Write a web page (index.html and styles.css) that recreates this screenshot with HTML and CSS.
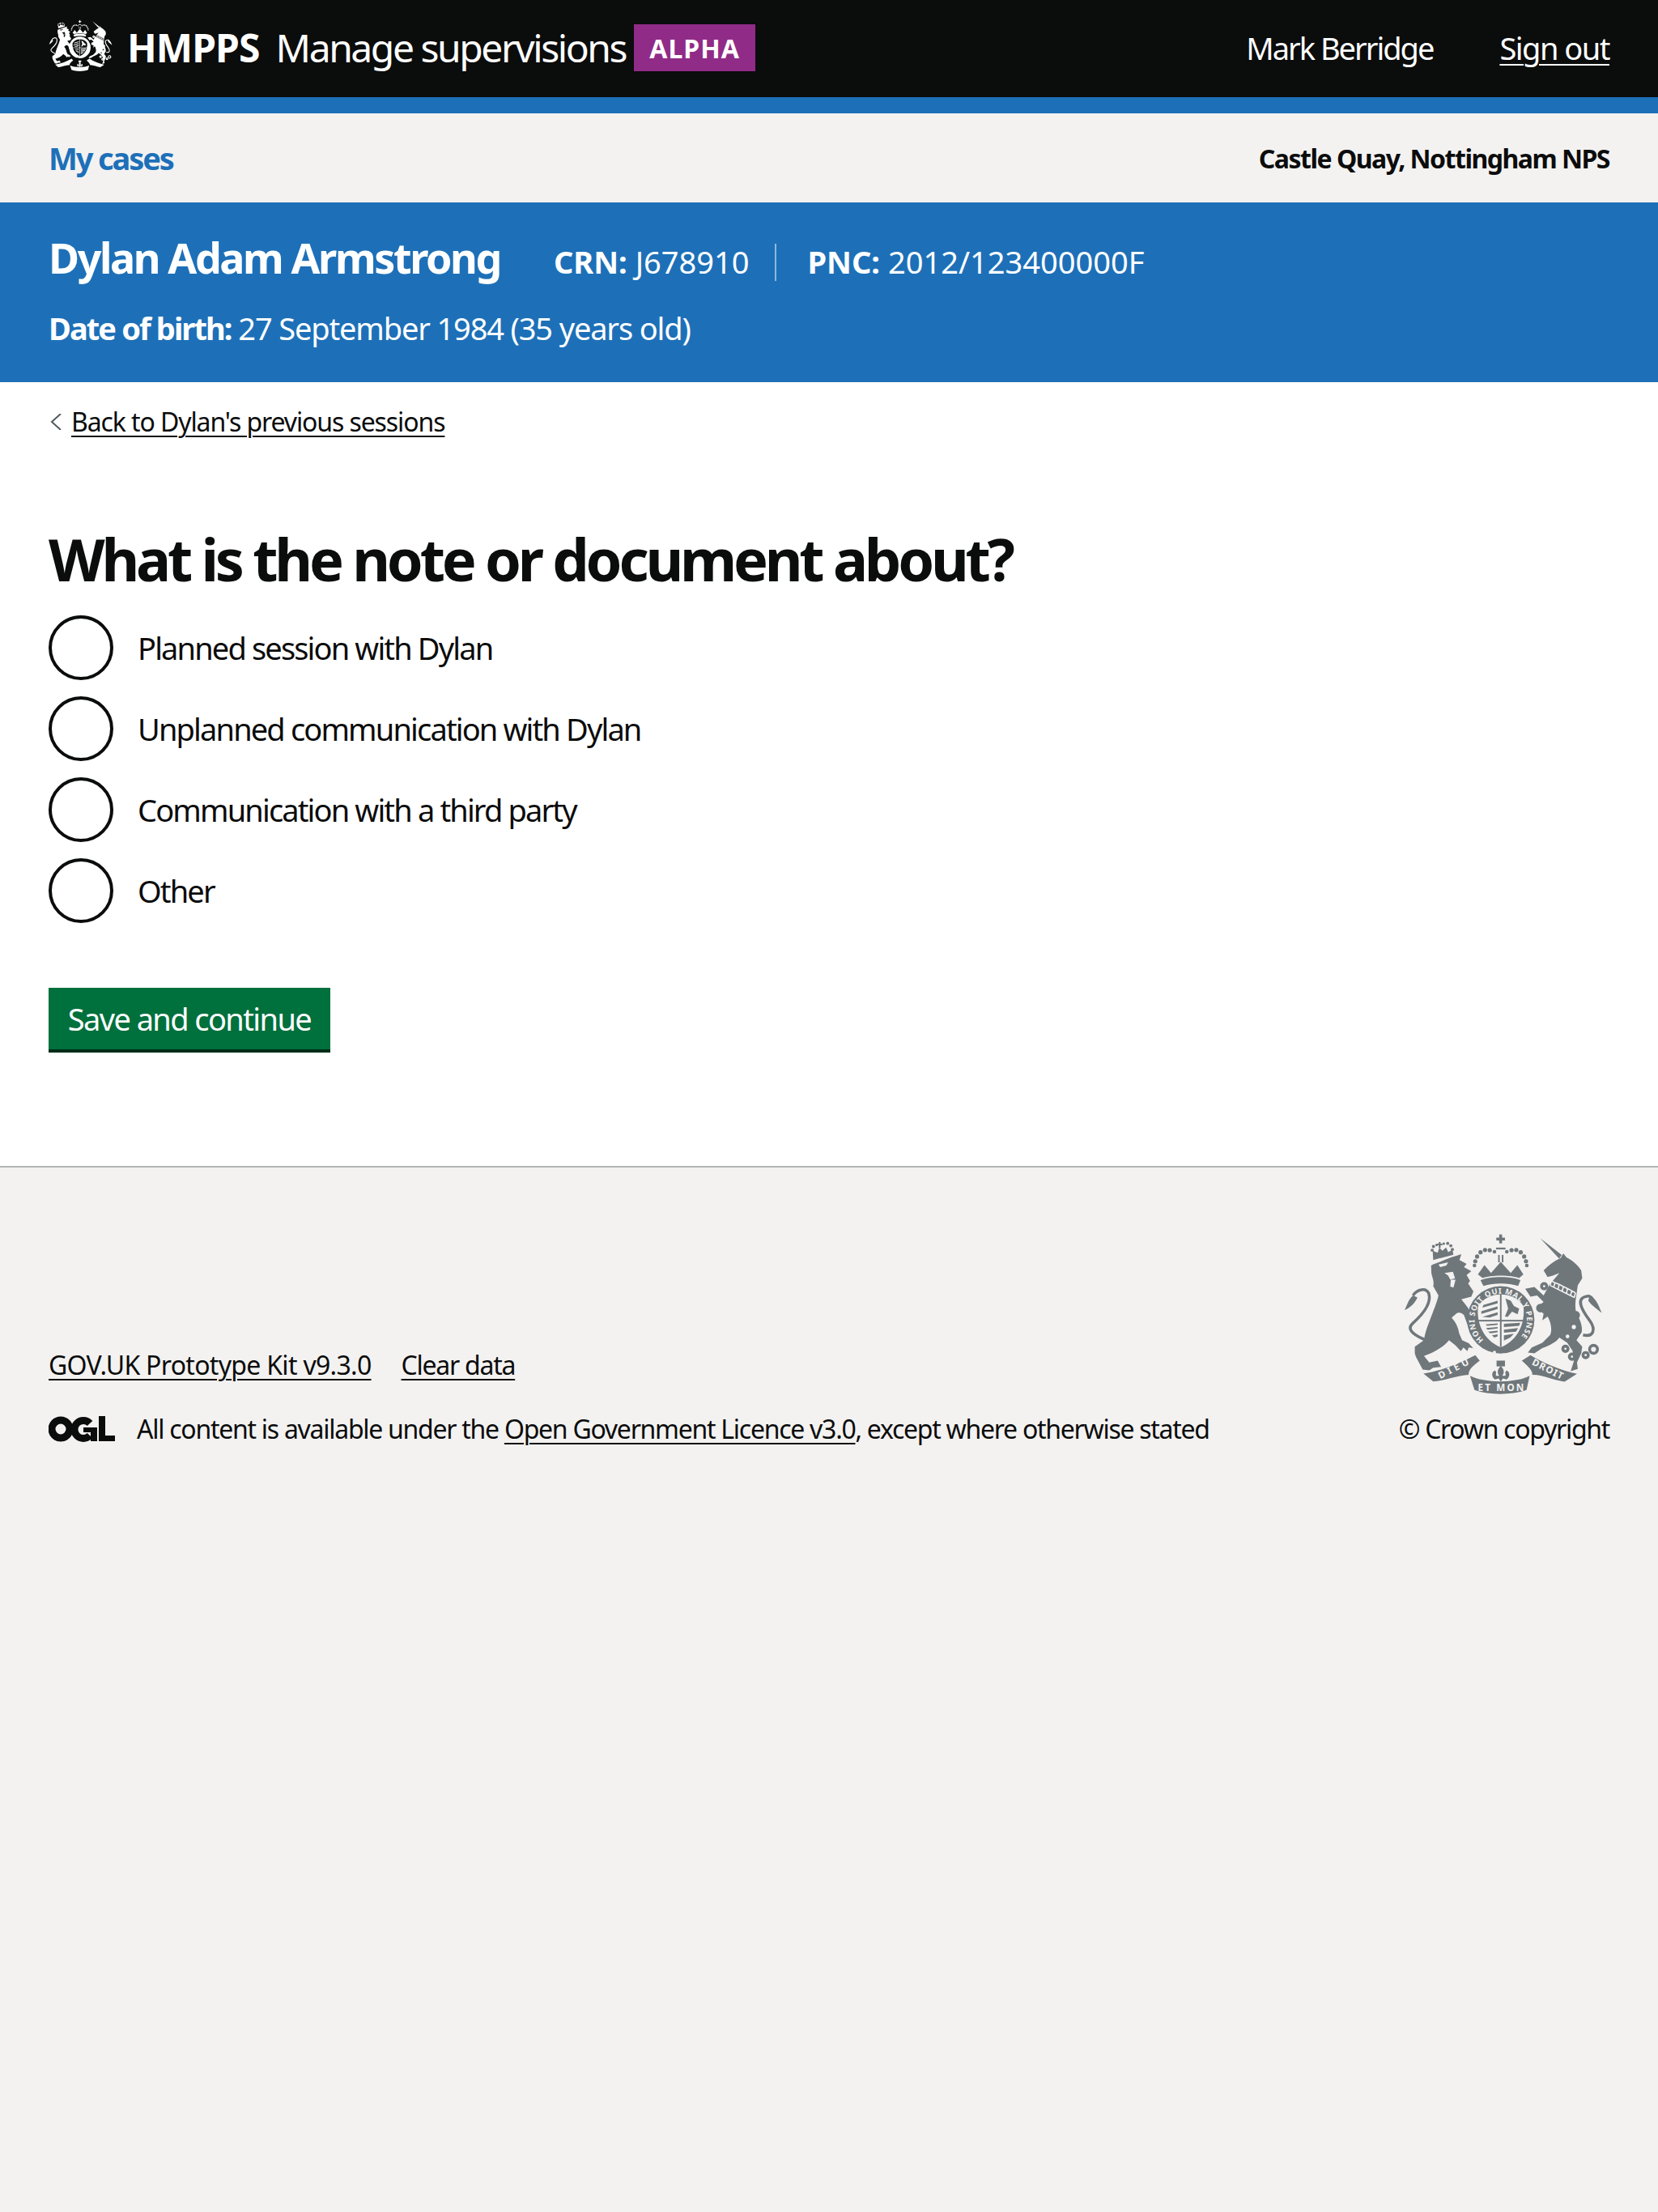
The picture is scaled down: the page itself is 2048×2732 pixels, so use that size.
FILE: index.html
```html
<!DOCTYPE html>
<html lang="en">
<head>
<meta charset="utf-8">
<title>What is the note or document about? - Manage supervisions</title>
<link rel="stylesheet" href="styles.css">
</head>
<body>
<svg class="sprite" aria-hidden="true">
  <defs>
    <symbol id="crest-art" viewBox="90 60 770 625">
      <g class="ink">
        <path d="M205,165 L282,145 L278,126 L262,135 L254,118 L240,130 L228,118 L222,138 L203,130Z"/>
        <rect x="226" y="97" width="7" height="22"/><rect x="219" y="103" width="21" height="6"/>
        <circle cx="201" cy="128" r="6"/><circle cx="206" cy="114" r="6"/><circle cx="218" cy="108" r="5"/><circle cx="245" cy="103" r="5"/><circle cx="260" cy="102" r="6"/><circle cx="272" cy="111" r="6"/><circle cx="278" cy="125" r="6"/>
        <path d="M197,186 C210,178 225,176 245,166 C270,156 290,150 312,143 L305,165 L332,180 L322,192 L350,208 L332,222 L345,245 L338,255 L358,285 L350,305 L312,315 C325,330 340,350 345,360 L365,395 L372,420 L352,425 L335,410 L322,375 C312,365 300,362 290,372 L275,385 C290,400 300,420 304,445 L315,470 L340,482 L357,500 L340,498 L335,512 L320,498 L310,512 L290,490 L265,470 C250,490 220,510 195,520 L170,530 L190,555 L222,548 L235,572 L205,575 L190,585 L165,582 C155,560 140,540 135,520 L135,495 L170,470 C175,430 195,390 205,360 C215,335 222,315 225,300 L205,265 C210,245 200,230 198,215Z"/>
        <path d="M128,300 C110,315 105,340 96,356 C115,348 135,332 145,308Z"/>
        <path d="M612,82 L694,146 L684,160Z"/>
        <path d="M625,205 C640,190 660,172 690,158 L700,140 L712,155 C735,165 760,190 768,205 L772,235 L755,262 L748,310 C745,330 745,345 748,362 C760,385 775,415 770,440 L750,470 L772,495 L768,520 L752,555 L755,580 L728,588 L740,550 L735,510 L715,480 L685,460 C675,475 650,490 620,500 L590,520 L565,517 L580,498 L620,480 L650,450 C660,430 650,395 640,380 L620,395 L625,370 L600,345 L625,325 L600,300 L575,305 L555,275 L590,268 L625,300 L650,255 C660,245 675,228 685,215 L660,225 L640,230Z"/>
        <path d="M800,300 C825,310 835,340 846,366 C825,350 805,335 795,320Z"/>
        <circle cx="462" cy="393" r="128"/>
        <path d="M375,220 L400,185 L425,215 L462,172 L500,215 L525,185 L548,220 L532,234 C500,222 425,222 393,234Z"/>
        <path d="M385,242 C420,226 505,226 537,242 L528,264 C490,252 435,252 396,264Z"/>
        <rect x="456" y="68" width="11" height="34"/><rect x="445" y="80" width="33" height="11"/>
        <rect x="444" y="118" width="36" height="7"/>
        <rect x="452" y="146" width="6" height="28"/><rect x="466" y="146" width="6" height="28"/>
        <circle cx="365" cy="170" r="8"/><circle cx="362" cy="186" r="7"/><circle cx="372" cy="152" r="8"/><circle cx="385" cy="136" r="8"/><circle cx="402" cy="127" r="8"/><circle cx="420" cy="128" r="8"/><circle cx="438" cy="134" r="7"/>
        <circle cx="558" cy="170" r="8"/><circle cx="561" cy="186" r="7"/><circle cx="551" cy="152" r="8"/><circle cx="538" cy="136" r="8"/><circle cx="521" cy="127" r="8"/><circle cx="503" cy="128" r="8"/><circle cx="485" cy="134" r="7"/>
        <path d="M168,597 C230,590 300,560 365,527 L382,548 C360,565 338,582 340,602 C290,605 250,625 205,627Z"/>
        <path d="M345,606 C400,634 520,634 572,606 L560,660 C500,680 420,680 362,660Z"/>
        <path d="M542,548 L575,527 C620,555 690,585 752,598 L705,628 C670,625 620,600 582,602 C585,585 560,565 542,548Z"/>
        <rect x="446" y="548" width="32" height="22"/>
        <path d="M462,568 C476,582 476,594 468,606 L480,606 C482,598 476,592 484,586 C498,590 498,610 484,620 L470,616 L462,628 L454,616 L440,620 C426,610 426,590 440,586 C448,592 442,598 444,606 L456,606 C448,594 448,582 462,568Z"/>
      </g>
      <g class="tails">
        <path d="M172,468 C120,445 105,425 128,405 C165,372 200,330 188,292 C178,270 145,275 128,300"/>
        <path d="M775,450 C815,460 825,430 800,395 C770,355 745,310 790,303 C800,300 805,305 810,312"/>
        <circle cx="627" cy="265" r="10"/><circle cx="613" cy="348" r="11"/><circle cx="748" cy="375" r="10"/><circle cx="708" cy="503" r="10"/><circle cx="733" cy="533" r="10"/><circle cx="785" cy="527" r="10"/><circle cx="815" cy="505" r="15"/>
      </g>
      <g class="cut">
        <path d="M376,340 C395,310 430,296 462,296 C495,296 530,310 548,340 C556,400 530,470 462,497 C394,470 368,400 376,340Z"/>
        <circle cx="438" cy="516" r="6"/><circle cx="472" cy="526" r="6"/>
        <circle cx="716" cy="456" r="7"/><circle cx="740" cy="420" r="8"/>
        <path d="M248,215 L280,210 L288,235 L270,240 L262,225Z"/>
        <path d="M225,182 L262,174 L255,186 L232,192Z"/>
        <path d="M272,240 L290,240 L282,270 L270,266Z"/>
        <path d="M300,370 L322,380 L335,420 L322,460 L315,420 L295,385Z"/>
      </g>
      <path class="cut-line" d="M650,262 L742,308 M654,244 L650,262 M668,252 L664,268 M684,258 L680,276 M700,266 L696,284 M716,274 L712,292 M732,282 L728,300 M746,290 L742,308 M654,244 L668,252 L684,258 L700,266 L716,274 L732,282 L746,290"/>
      <g class="ink">
        <rect x="459" y="296" width="6" height="200"/><rect x="374" y="393" width="176" height="6"/>
        <path d="M396,336 L450,320 V330 L392,346Z M388,360 L450,342 V352 L388,370Z M392,382 L450,364 V374 L420,384Z"/>
        <path d="M480,312 L500,320 L512,340 L532,350 L526,372 L505,362 L488,382 L478,380 L490,350Z"/>
        <path d="M404,410 L450,406 L450,412 L410,416Z M406,424 L450,420 L450,426 L412,430Z M414,438 L450,434 L450,440 L422,444Z M428,452 L450,448 L450,456 L438,460Z"/>
        <path d="M474,408 L536,404 L532,416 L474,420Z M474,430 L528,424 L520,438 L474,442Z M474,452 L512,446 L498,460 L474,472Z"/>
      </g>
    </symbol>
  </defs>
</svg>

<header class="masthead">
  <div class="brand">
    <svg class="brand-crest" viewBox="0 0 80 65" aria-hidden="true"><use href="#crest-art" width="80" height="65"/></svg>
    <span class="brand-org">HMPPS</span>
    <span class="brand-service">Manage supervisions</span>
    <strong class="phase-tag">ALPHA</strong>
  </div>
  <nav class="user-nav">
    <span>Mark Berridge</span>
    <a class="sign-out" href="#">Sign out</a>
  </nav>
</header>

<div class="subnav">
  <a class="subnav-link" href="#">My cases</a>
  <span class="subnav-team">Castle Quay, Nottingham NPS</span>
</div>

<section class="offender">
  <div class="offender-row">
    <h2 class="offender-name">Dylan Adam Armstrong</h2>
    <p class="offender-id offender-crn"><b>CRN:</b> J678910</p>
    <p class="offender-id offender-pnc"><b>PNC:</b> 2012/123400000F</p>
  </div>
  <p class="offender-dob"><b>Date of birth:</b> 27 September 1984 (35 years old)</p>
</section>

<main class="content">
  <a class="back-link" href="#">
    <svg class="back-chevron" viewBox="0 0 14 20" aria-hidden="true"><path d="M13,0 L2,10 L13,20"/></svg>
    <span class="back-text">Back to Dylan's previous sessions</span>
  </a>
  <form class="question">
    <h1 class="question-title">What is the note or document about?</h1>
    <div class="radios">
      <label class="radio"><input type="radio" name="about"><span>Planned session with Dylan</span></label>
      <label class="radio"><input type="radio" name="about"><span>Unplanned communication with Dylan</span></label>
      <label class="radio"><input type="radio" name="about"><span>Communication with a third party</span></label>
      <label class="radio"><input type="radio" name="about"><span>Other</span></label>
    </div>
    <button class="button" type="button">Save and continue</button>
  </form>
</main>

<footer class="footer">
  <div class="footer-meta">
    <ul class="footer-links">
      <li><a href="#">GOV.UK Prototype Kit v9.3.0</a></li>
      <li class="footer-link-short"><a href="#">Clear data</a></li>
    </ul>
    <div class="licence">
      <svg class="ogl" viewBox="0 0 82 32" aria-hidden="true">
        <circle class="ogl-stroke" cx="15" cy="16" r="11"/>
        <path class="ogl-stroke" d="M51,9 A11,11 0 1 0 51,24"/>
        <rect x="43" y="14" width="16" height="6"/>
        <rect x="52" y="14" width="8" height="17"/>
        <rect x="62" y="0" width="8" height="31"/>
        <rect x="62" y="24" width="20" height="7"/>
      </svg>
      <span>All content is available under the <a href="#">Open Government Licence v3.0</a>, except where otherwise stated</span>
    </div>
  </div>
  <div class="copyright">
    <svg class="footer-crest" viewBox="90 60 770 625" aria-hidden="true">
      <use href="#crest-art" x="90" y="60" width="770" height="625"/>
      <defs>
        <path id="garter-arc" d="M397,469 A100,100 0 1 1 530,466"/>
      </defs>
      <text class="crest-text garter-text"><textPath href="#garter-arc" textLength="468">HONI SOIT QUI MAL Y PENSE</textPath></text>
      <text class="crest-text" transform="translate(232,618) rotate(-27)" textLength="125">DIEU</text>
      <text class="crest-text" x="375" y="665" textLength="175">ET MON</text>
      <text class="crest-text" transform="translate(578,562) rotate(27)" textLength="128">DROIT</text>
    </svg>
    <a class="copyright-text" href="#">© Crown copyright</a>
  </div>
</footer>
</body>
</html>
```
FILE: styles.css
```css
* { box-sizing: border-box; }
html, body { margin: 0; padding: 0; }
body {
  min-height: 100vh;
  display: flex;
  flex-direction: column;
  font-family: "Noto Sans", "Liberation Sans", sans-serif;
  color: #0b0c0c;
  background: #fff;
}
a { color: inherit; text-underline-offset: 5px; text-decoration-thickness: 2px; }
p, h1, h2, ul { margin: 0; padding: 0; }
.sprite { position: absolute; width: 0; height: 0; }

.ink { fill: currentColor; }
.tails { fill: none; stroke: currentColor; stroke-width: 11; }
.cut { fill: var(--crest-bg); }
.cut-line { fill: none; stroke: var(--crest-bg); stroke-width: 5; }
.crest-text { fill: var(--crest-bg); font: 700 36px "Noto Sans", sans-serif; letter-spacing: 0; }
.garter-text { font-size: 29px; }

.masthead {
  height: 140px;
  flex: none;
  display: flex;
  align-items: center;
  justify-content: space-between;
  padding: 0 60px 4px;
  color: #fff;
  background: #0b0c0c;
  border-bottom: 20px solid #1d70b8;
  --crest-bg: #0b0c0c;
}
.brand { display: flex; align-items: center; }
.brand-crest { width: 80px; height: 65px; color: #fff; margin-right: 17px; margin-top: -3px; }
.brand-org { font-size: 48px; font-weight: 700; letter-spacing: -.9px; margin-right: 20px; }
.brand-service { font-size: 48px; letter-spacing: -2.45px; margin-right: 10px; }
.phase-tag {
  width: 150px;
  height: 58px;
  margin-top: 2px;
  display: flex;
  align-items: center;
  justify-content: center;
  font-size: 32px;
  letter-spacing: 1px;
  background: #912b88;
}
.user-nav { display: flex; gap: 82px; margin-top: 2px; font-size: 38px; letter-spacing: -2px; }
.sign-out { letter-spacing: -1.5px; }

.subnav {
  height: 110px;
  flex: none;
  display: flex;
  align-items: center;
  justify-content: space-between;
  padding: 0 60px;
  background: #f3f2f1;
}
.subnav-link { color: #1d70b8; font-size: 38px; font-weight: 700; letter-spacing: -2.1px; text-decoration: none; }
.subnav-team { font-size: 32px; font-weight: 700; letter-spacing: -1.5px; }

.offender {
  height: 222px;
  flex: none;
  padding: 32px 60px 0;
  color: #fff;
  background: #1d70b8;
}
.offender-row { display: flex; align-items: baseline; }
.offender-name { font-size: 52px; font-weight: 700; letter-spacing: -2.4px; margin-right: 66px; }
.offender-id { font-size: 38px; letter-spacing: 0; }
.offender-crn { padding: 0 32px 2px 0; border-right: 2px solid #8fb8dc; line-height: 44px; margin-right: 38px; }
.offender-dob { margin-top: 26px; font-size: 38px; letter-spacing: -1.15px; }
.offender-dob b { letter-spacing: -1.9px; }

.content { flex: none; height: 968px; padding: 27px 60px 0; }
.back-link { display: inline-flex; align-items: center; font-size: 32px; letter-spacing: -1.1px; }
.back-chevron {
  width: 14px;
  height: 20px;
  margin: 0 12px 0 2px;
  fill: none;
  stroke: #505a5f;
  stroke-width: 2;
}
.question { margin-top: 103px; }
.question-title { font-size: 72px; line-height: 90px; font-weight: 700; letter-spacing: -4.2px; margin-bottom: 25px; }
.radios { display: flex; flex-direction: column; gap: 20px; }
.radio { display: flex; align-items: center; gap: 30px; font-size: 38px; letter-spacing: -1.85px; height: 80px; }
.radio input {
  appearance: none;
  width: 80px;
  height: 80px;
  margin: 0;
  flex: none;
  border: 4px solid #0b0c0c;
  border-radius: 50%;
  background: #fff;
}
.button {
  display: block;
  width: 348px;
  height: 80px;
  margin-top: 80px;
  padding: 0;
  border: 0;
  border-bottom: 4px solid #002d18;
  font: inherit;
  font-size: 38px;
  letter-spacing: -1.6px;
  color: #fff;
  background: #00703c;
}

.footer {
  flex: 1;
  display: flex;
  justify-content: space-between;
  align-items: flex-start;
  padding: 80px 60px 0;
  background: #f3f2f1;
  border-top: 2px solid #b1b4b6;
  font-size: 32px;
  --crest-bg: #f3f2f1;
}
.footer-meta { padding-top: 142px; }
.footer-links { display: flex; gap: 37px; list-style: none; margin-bottom: 36px; letter-spacing: -.7px; }
.footer-link-short { letter-spacing: -1.25px; }
.licence { display: flex; align-items: center; gap: 27px; letter-spacing: -1.27px; }
.ogl { width: 82px; height: 32px; fill: #0b0c0c; }
.ogl-stroke { fill: none; stroke: #0b0c0c; stroke-width: 9; }
.copyright { display: flex; flex-direction: column; align-items: center; letter-spacing: -1.3px; }
.footer-crest { width: 250px; height: 203px; color: #6f777b; margin-bottom: 18px; }
.copyright-text { text-decoration: none; }
```
